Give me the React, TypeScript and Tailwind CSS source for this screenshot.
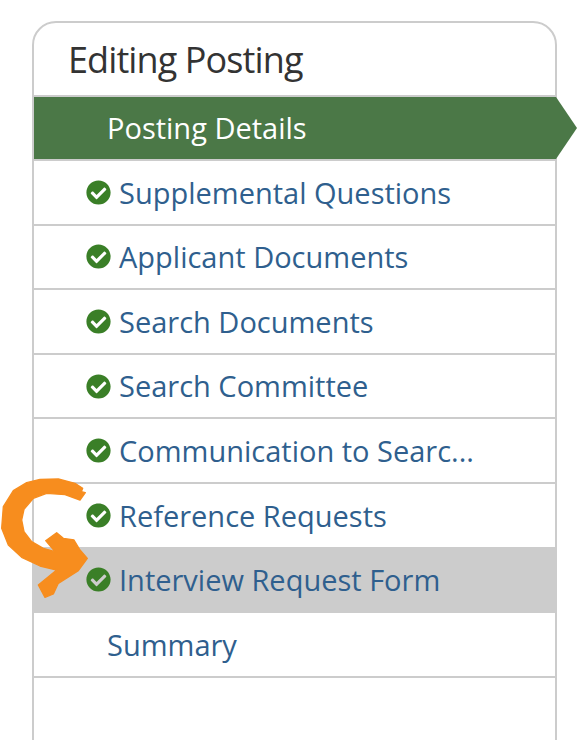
import { FaCheckCircle } from "react-icons/fa";

const steps = [
    { label: "Supplemental Questions", done: true },
    { label: "Applicant Documents", done: true },
    { label: "Search Documents", done: true },
    { label: "Search Committee", done: true },
    { label: "Communication to Searc...", done: true },
    { label: "Reference Requests", done: true },
    { label: "Interview Request Form", done: true, hover: true },
    { label: "Summary", done: false },
];

export default function App() {
    return <div className="relative h-[740px] overflow-hidden bg-white pt-[21px] px-[32px] font-['Open_Sans',sans-serif]">
        <div className="w-[525px] h-[800px] border-[2.5px] border-[#cccccc] rounded-t-[24px]">
            <div className="h-[72px] pl-[34px] pt-[13px] text-[36px] leading-[48px] font-medium tracking-[-0.9px] text-[#333333]">Editing Posting</div>
            <div className="h-[2px] bg-[#cccccc]" />
            <div className="w-[543px] h-[62px] flex items-center pl-[73px] bg-[#4b7847] text-white text-[29px] [clip-path:polygon(0_0,522px_0,100%_50%,522px_100%,0_100%)]">Posting Details</div>
            {steps.map((step, index) => <div key={index} className={"h-[64.6px] border-t-2 border-[#cccccc] flex items-center text-[29px] text-[#2f5f8e] " + (step.hover ? "bg-[#cccccc] " : "") + (step.done ? "pl-[52px]" : "pl-[73px]")}>
                {step.done && <FaCheckCircle className="w-[25px] h-[25px] mr-[8px] text-[#3a7f27] shrink-0" />}
                <span>{step.label}</span>
            </div>)}
            <div className="border-t-2 border-[#cccccc]" />
        </div>
        <svg className="absolute left-0 top-[470px]" width="200" height="150" viewBox="0 0 600 450">
            <path fill="#f78d1e" stroke="#f78d1e" strokeWidth="4" strokeLinejoin="round" d="M120 28 L175 27 L225 40 L248 55 L244 65 L256 68 L240 90 L195 74 L140 70 L100 85 L72 118 L65 150 L72 185 L95 215 L130 235 L165 245 L137 212 L170 188 L190 205 L222 210 L240 240 L262 265 L235 302 L175 340 L160 372 L135 382 L115 345 L170 300 L120 288 L65 262 L25 225 L5 175 L10 110 L40 62 L80 38 Z" />
        </svg>
    </div>;
}
